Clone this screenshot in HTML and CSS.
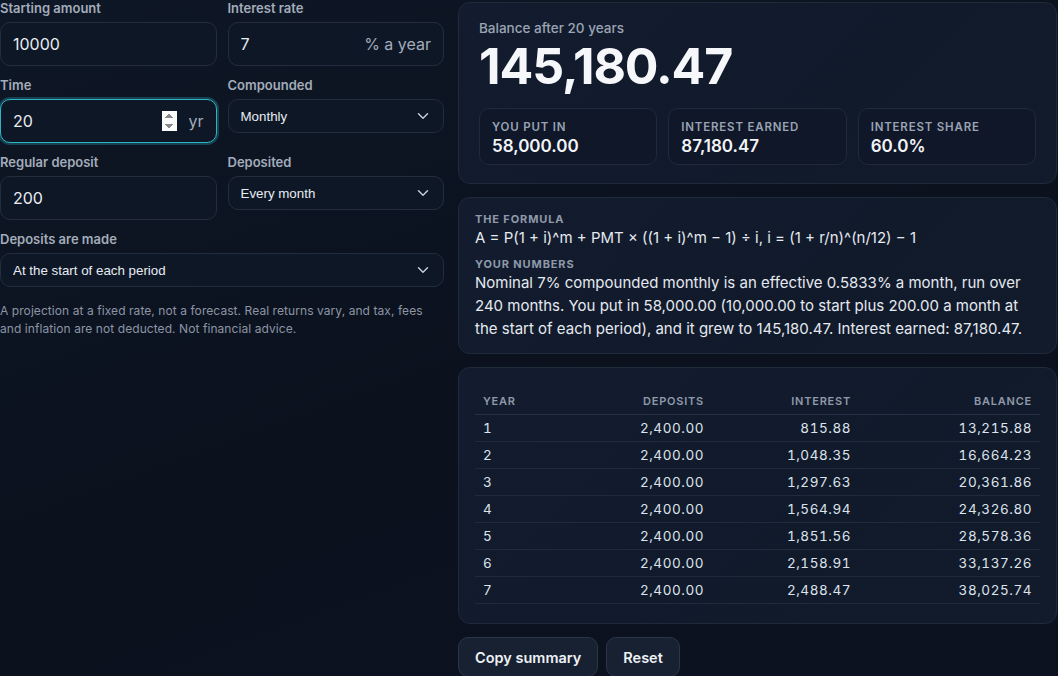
FILE: index.html
```html
<!DOCTYPE html>
<html lang="en-US">

<head>
	<title>Compound interest</title>
	<meta charset="utf-8">
	<meta name="viewport" content="width=device-width, initial-scale=1.0">
	<link rel="stylesheet" href="styles.css">
</head>

<body>

	<main class="calc">

		<!-- Inputs -->
		<section class="inputs">
			<div class="fields">
				<label class="field">
					<span class="field-label">Starting amount</span>
					<span class="input-box">
						<input type="number" value="10000">
					</span>
				</label>

				<label class="field">
					<span class="field-label">Interest rate</span>
					<span class="input-box">
						<input type="number" value="7">
						<span class="suffix">% a year</span>
					</span>
				</label>

				<label class="field">
					<span class="field-label">Time</span>
					<span class="input-box is-active">
						<input type="number" value="20">
						<span class="suffix">yr</span>
					</span>
				</label>

				<label class="field">
					<span class="field-label">Compounded</span>
					<select class="select">
						<option>Yearly</option>
						<option>Quarterly</option>
						<option selected>Monthly</option>
						<option>Daily</option>
					</select>
				</label>

				<label class="field">
					<span class="field-label">Regular deposit</span>
					<span class="input-box">
						<input type="number" value="200">
					</span>
				</label>

				<label class="field">
					<span class="field-label">Deposited</span>
					<select class="select">
						<option selected>Every month</option>
						<option>Every year</option>
					</select>
				</label>

				<label class="field field-wide">
					<span class="field-label">Deposits are made</span>
					<select class="select">
						<option selected>At the start of each period</option>
						<option>At the end of each period</option>
					</select>
				</label>
			</div>

			<p class="note">A projection at a fixed rate, not a forecast. Real returns vary, and tax, fees and inflation are not deducted. Not financial advice.</p>
		</section>

		<!-- Results -->
		<section class="results">
			<div class="card summary">
				<div class="summary-label">Balance after 20 years</div>
				<div class="summary-total">145,180.47</div>

				<div class="stats">
					<div class="stat">
						<div class="stat-label">You put in</div>
						<div class="stat-value">58,000.00</div>
					</div>
					<div class="stat">
						<div class="stat-label">Interest earned</div>
						<div class="stat-value">87,180.47</div>
					</div>
					<div class="stat">
						<div class="stat-label">Interest share</div>
						<div class="stat-value">60.0%</div>
					</div>
				</div>
			</div>

			<div class="card explain">
				<div class="heading">The formula</div>
				<p class="formula">A = P(1 + i)^m + PMT × ((1 + i)^m − 1) ÷ i, i = (1 + r/n)^(n/12) − 1</p>

				<div class="heading heading-gap">Your numbers</div>
				<p class="explain-text">Nominal 7% compounded monthly is an effective 0.5833% a month, run over 240 months. You put in 58,000.00 (10,000.00 to start plus 200.00 a month at the start of each period), and it grew to 145,180.47. Interest earned: 87,180.47.</p>
			</div>

			<div class="card schedule">
				<div class="table-scroll">
					<table class="table">
						<thead>
							<tr>
								<th class="col-year">Year</th>
								<th class="col-num">Deposits</th>
								<th class="col-num">Interest</th>
								<th>Balance</th>
							</tr>
						</thead>
						<tbody id="rows"></tbody>
					</table>
				</div>
			</div>

			<div class="actions">
				<button class="btn" type="button">Copy summary</button>
				<button class="btn" type="button">Reset</button>
			</div>
		</section>

	</main>

	<script>
		// Inputs for the schedule
		var start = 10000;
		var rate = 0.07;
		var perYear = 12;
		var deposit = 200;
		var years = 20;

		// effective monthly rate
		var monthly = Math.pow(1 + rate / perYear, perYear / 12) - 1;

		var money = function (value) {
			return value.toLocaleString('en-US', {
				minimumFractionDigits: 2,
				maximumFractionDigits: 2
			});
		};

		var body = document.querySelector('#rows');
		var balance = start;

		for (var year = 1; year <= years; year++) {
			var opening = balance;

			// deposits land at the start of each month
			for (var month = 0; month < 12; month++) {
				balance = (balance + deposit) * (1 + monthly);
			}

			var row = document.createElement('tr');
			[year, money(deposit * 12), money(balance - opening - deposit * 12), money(balance)].forEach(function (text) {
				var cell = document.createElement('td');
				cell.textContent = text;
				row.append(cell);
			});
			body.append(row);
		}
	</script>

</body>

</html>
```

FILE: styles.css
```css
*,
*:before,
*:after {
	box-sizing: border-box;
}

/**
 * Layout
 */
html {
	background-color: #0b111d;
}

body {
	background: linear-gradient(160deg, #0e1726 0%, #0b111d 55%, #0c1220 100%);
	color: #e5e9f0;
	font-family: Inter, "Noto Sans", sans-serif;
	margin: 0;
	min-height: 100vh;
}

.calc {
	display: grid;
	gap: 14px;
	grid-template-columns: 444px 599px;
}

/**
 * Inputs
 */
.fields {
	display: grid;
	gap: 11px;
	grid-template-columns: repeat(2, minmax(0, 1fr));
	align-items: start;
}

.field {
	display: flex;
	flex-direction: column;
	gap: 6px;
	min-width: 0;
}

.field-wide {
	grid-column: 1 / -1;
}

.field-label {
	color: #a3acba;
	font-size: 13px;
	font-weight: 600;
	line-height: 16px;
}

.input-box {
	align-items: center;
	background-color: #0e1726;
	border: 1px solid #222d3e;
	border-radius: 10px;
	display: flex;
	height: 44px;
	padding: 0 12px;
}

.input-box input {
	background: none;
	border: 0;
	color: #e8ecf2;
	flex: 1;
	font-family: inherit;
	font-size: 16px;
	line-height: 20px;
	min-width: 0;
	outline: none;
	padding: 0;
	width: 0;
}

.input-box input::-webkit-inner-spin-button {
	opacity: 0;
}

.input-box.is-active {
	border-color: #2fb4c6;
	box-shadow: 0 0 0 2px rgba(47, 180, 198, 0.28);
}

.input-box.is-active input::-webkit-inner-spin-button {
	opacity: 1;
}

.suffix {
	color: #a3acba;
	font-size: 16px;
	margin-left: 11px;
}

.select {
	appearance: none;
	background-color: #0e1726;
	background-image: url("data:image/svg+xml,%3Csvg xmlns='http://www.w3.org/2000/svg' width='12' height='8' viewBox='0 0 12 8'%3E%3Cpath d='M1.5 1.8 6 6.2l4.5-4.4' fill='none' stroke='%23c3cbd6' stroke-width='1.5' stroke-linecap='round' stroke-linejoin='round'/%3E%3C/svg%3E");
	background-position: right 14px center;
	background-repeat: no-repeat;
	border: 1px solid #222d3e;
	border-radius: 10px;
	color: #e8ecf2;
	font-family: "Liberation Sans", Arial, sans-serif;
	font-size: 13.33px;
	height: 34px;
	padding: 0 36px 0 12px;
	width: 100%;
}

.note {
	color: #8c95a4;
	font-size: 12px;
	letter-spacing: 0.006em;
	line-height: 18px;
	margin: 15px 0 0;
}

/**
 * Results
 */
.results {
	display: flex;
	flex-direction: column;
	gap: 13px;
	padding-top: 2px;
}

.card {
	background: linear-gradient(135deg, #131c2e 0%, #111a2b 60%, #121b2c 100%);
	border: 1px solid #1f2a3b;
	border-radius: 12px;
}

.summary {
	padding: 17px 20px 18px;
}

.summary-label {
	color: #9aa4b4;
	font-size: 13.5px;
	font-weight: 500;
	line-height: 16px;
}

.summary-total {
	color: #f5f7fa;
	font-size: 50px;
	font-weight: 700;
	letter-spacing: -0.022em;
	line-height: 52px;
	margin-top: 4px;
}

.stats {
	display: grid;
	gap: 11px;
	grid-template-columns: repeat(3, 1fr);
	margin-top: 16px;
}

.stat {
	background-color: #0f1728;
	border: 1px solid #1f2a3b;
	border-radius: 10px;
	height: 57px;
	padding: 11px 12px;
}

.stat-label {
	color: #9aa4b4;
	font-size: 11.5px;
	font-weight: 600;
	letter-spacing: 0.07em;
	line-height: 14px;
	text-transform: uppercase;
}

.stat-value {
	color: #f2f4f8;
	font-size: 17px;
	font-weight: 600;
	line-height: 20px;
	margin-top: 2px;
}

.explain {
	padding: 15px 16px 13px;
}

.heading {
	color: #8f99aa;
	font-size: 11px;
	font-weight: 700;
	letter-spacing: 0.08em;
	line-height: 13px;
	text-transform: uppercase;
}

.heading-gap {
	margin-top: 9px;
}

.formula,
.explain-text {
	color: #e5e9f0;
	font-size: 15px;
	line-height: 23px;
	margin: 0;
}

/**
 * Schedule table
 */
.schedule {
	padding: 16px 16px 19px;
}

.table-scroll {
	max-height: 220px;
	overflow-y: auto;
	scrollbar-width: none;
}

.table {
	border-collapse: collapse;
	width: 100%;
}

.table th {
	border-bottom: 1px solid #243045;
	color: #8f99aa;
	font-size: 11px;
	font-weight: 600;
	letter-spacing: 0.07em;
	line-height: 14px;
	padding: 10px 8px 6px;
	text-align: right;
	text-transform: uppercase;
}

.table th.col-year {
	text-align: left;
	width: 90px;
}

.table th.col-num {
	width: 147px;
}

.table td {
	border-bottom: 1px solid #1f2a3b;
	color: #dde3eb;
	font-size: 13.5px;
	font-variant-numeric: tabular-nums;
	letter-spacing: 0.04em;
	line-height: 18px;
	padding: 4px 8px;
	text-align: right;
}

.table td:first-child {
	text-align: left;
}

/**
 * Buttons
 */
.actions {
	display: flex;
	gap: 8px;
}

.btn {
	background-color: #172132;
	border: 1px solid #2a3548;
	border-radius: 10px;
	color: #eef1f5;
	font-family: inherit;
	font-size: 14.5px;
	font-weight: 600;
	height: 40px;
	padding: 0 16px;
}
```
